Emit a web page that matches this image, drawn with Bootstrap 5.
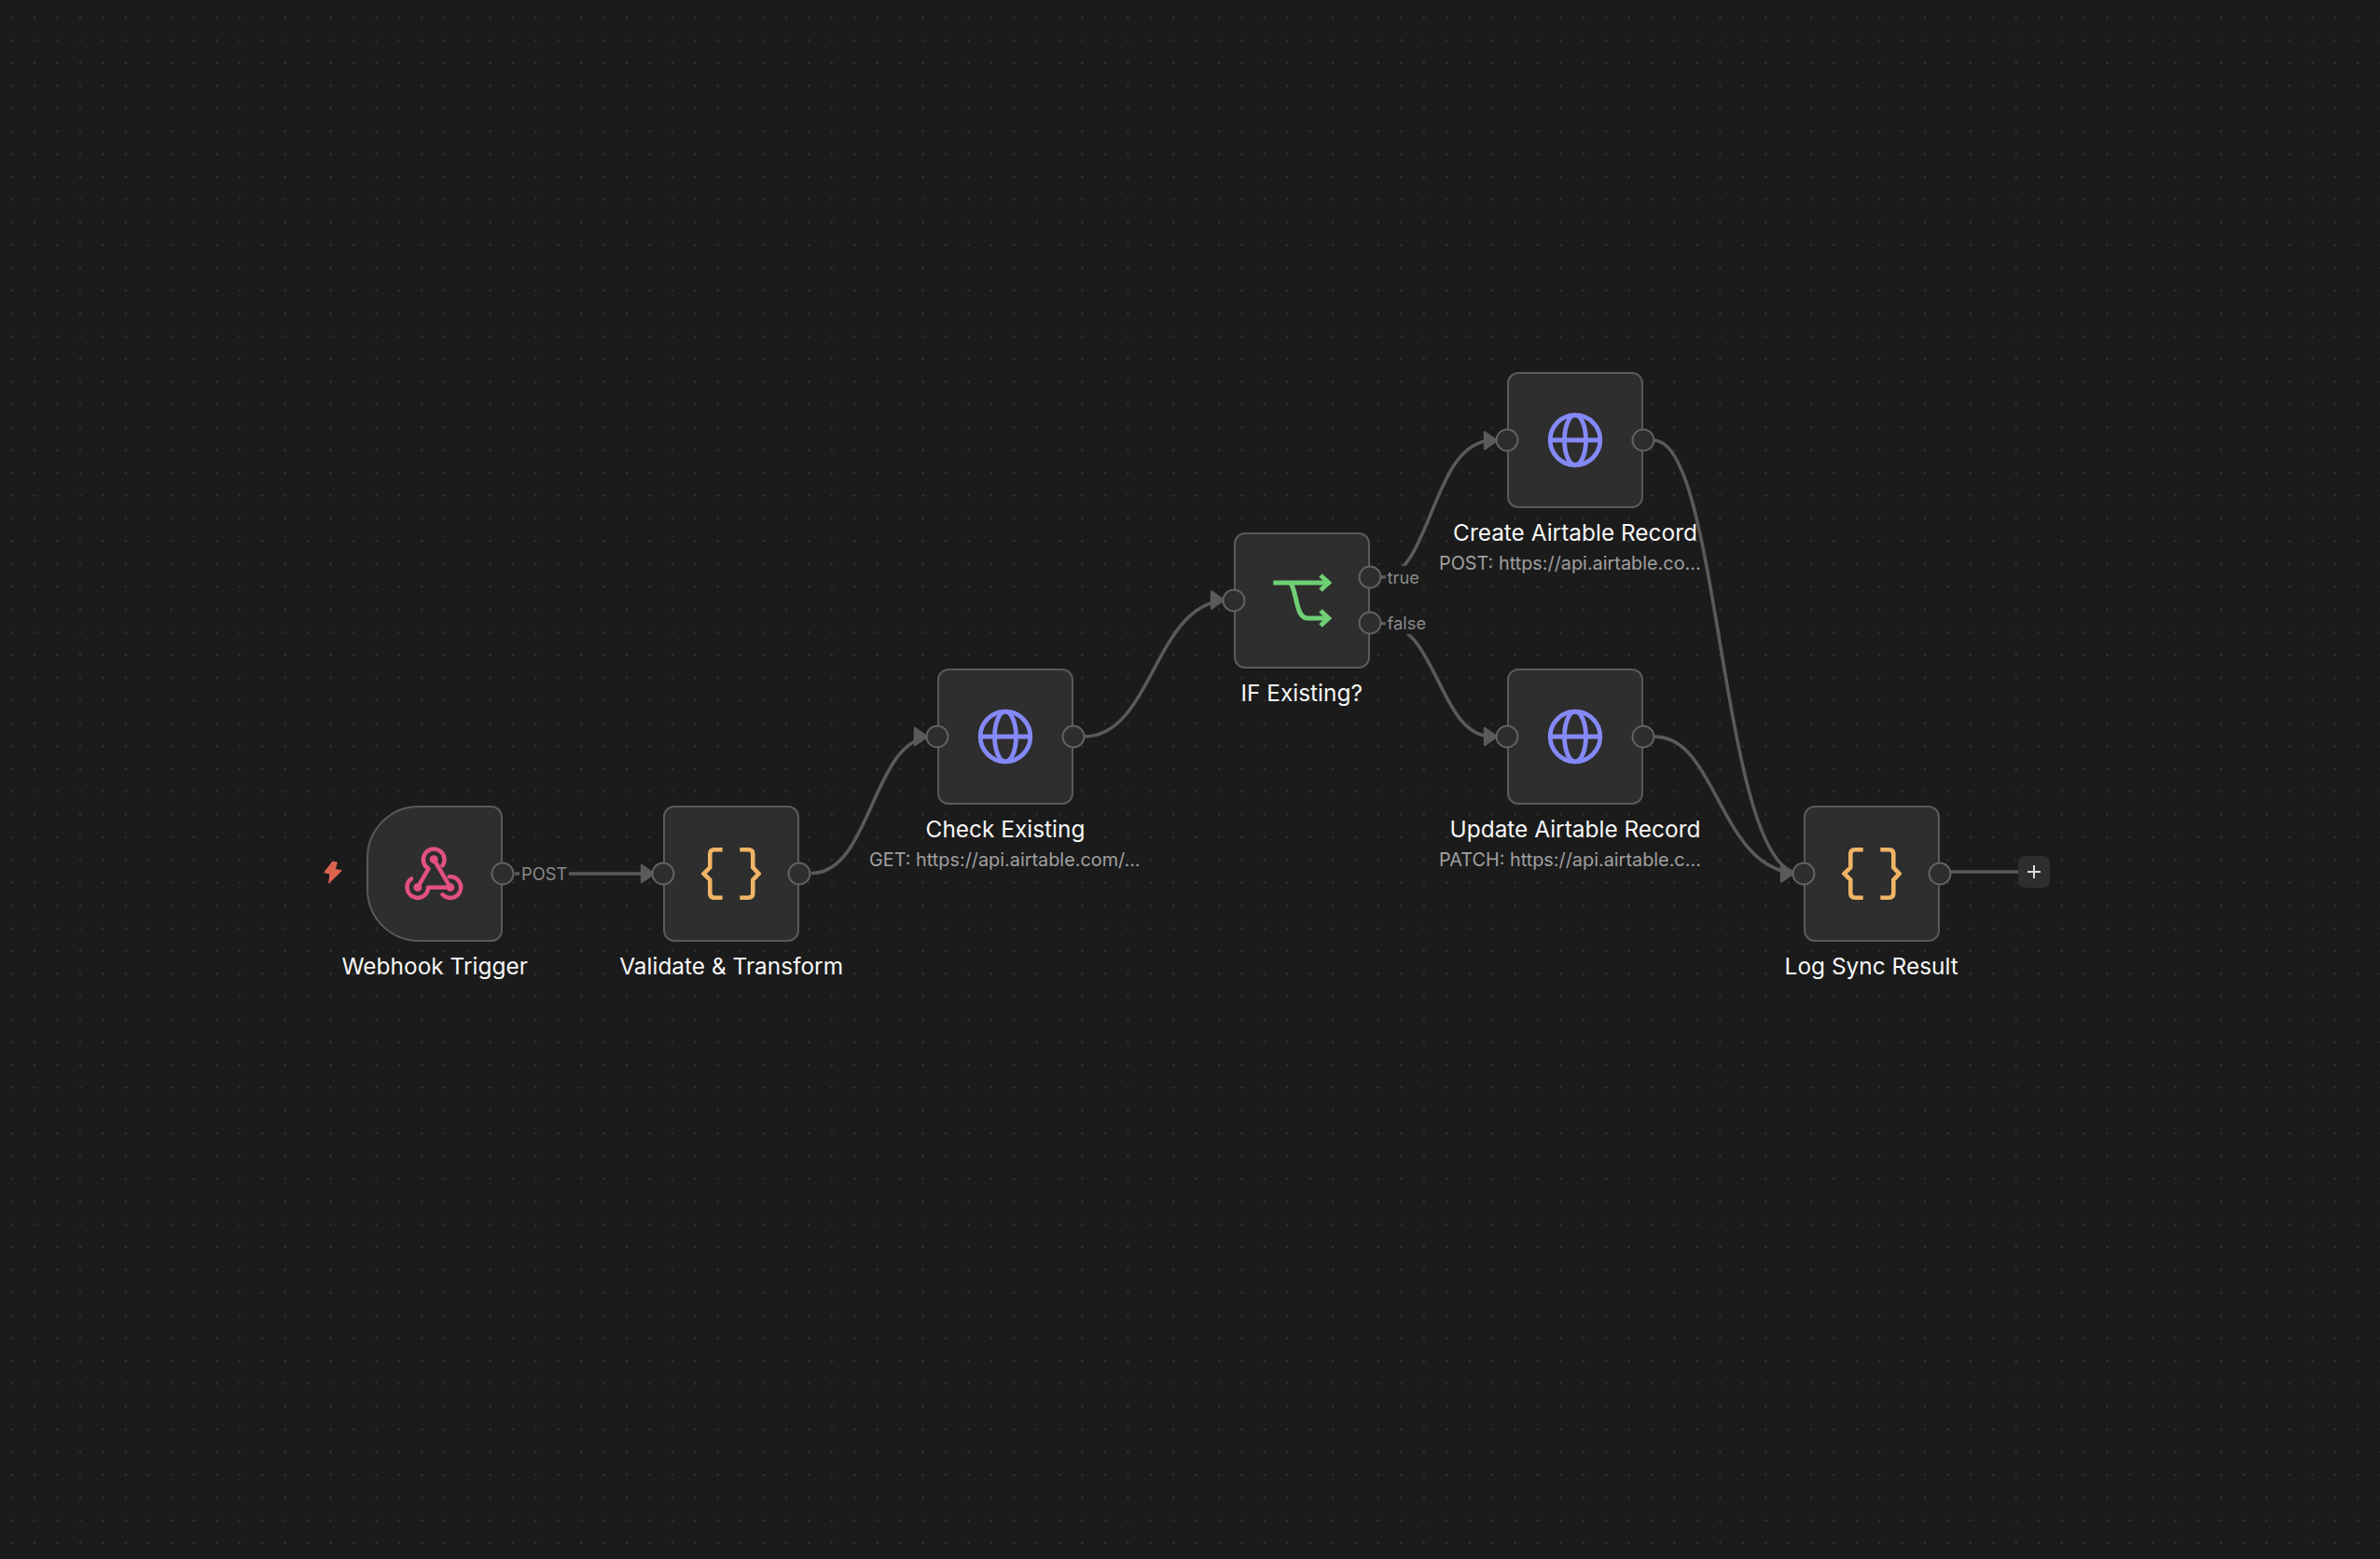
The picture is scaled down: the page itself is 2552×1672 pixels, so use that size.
<!DOCTYPE html>
<html lang="en" data-bs-theme="dark">
<head>
<meta charset="utf-8">
<title>Workflow canvas</title>
<link href="https://cdn.jsdelivr.net/npm/bootstrap@5.3.0/dist/css/bootstrap.min.css" rel="stylesheet">
<style>
html,body{height:100%;margin:0;background:#1b1b1b}
body{font-family:"Inter","Liberation Sans",sans-serif}
.canvas{width:2552px;height:1672px;background-color:#1b1b1b;background-image:radial-gradient(circle at center,#3a3a3a 0,#3a3a3a .8px,transparent 1.3px);background-size:24.43px 24.43px;background-position:.5px 6.5px;overflow:hidden}
.edges{left:0;top:0;width:2552px;height:1672px}
.edge{fill:none;stroke:#5a5a5a;stroke-width:3.6}
.tip{fill:#5a5a5a;stroke:#5a5a5a;stroke-width:2.4;stroke-linejoin:round}
.node{width:146px;height:146px}
.tile{width:146px;height:146px;background:#2e2e2e;border:2px solid #5a5a5a;border-radius:12px}
.tile.trigger{border-radius:56px 12px 12px 56px}
.port{width:25px;height:25px;border-radius:50%;background:#2e2e2e;border:2px solid #626262;transform:translate(-50%,-50%)}
.port.in{left:-2px;top:50%}
.port.out{left:calc(100% + 2px);top:50%}
.port.t{top:32.7%}
.port.f{top:67.6%}
.caption{top:158px;left:-77px;width:300px}
.title{font-size:24.43px;line-height:28px;font-weight:400;color:#f8f8f8;text-align:center}
.sub{font-size:19.85px;line-height:24px;color:#a0a0a0;margin-top:7px;padding-left:4px;white-space:nowrap}
.elabel{font-size:18.32px;line-height:24px;color:#8a8a8a;background:#1b1b1b;padding:0 2px;transform:translateY(-50%)}
.plus{left:2164px;top:918px;width:34px;height:34px;background:#2e2e2e;border-radius:7px}
.bolt{left:340px;top:915px}
.n1{left:393.2px;top:864px}.n2{left:711.2px;top:864px}.n3{left:1005px;top:717px}.n4{left:1322.7px;top:570.5px}
.n5{left:1616px;top:399px}.n6{left:1616px;top:717px}.n7{left:1933.7px;top:864px}
.l1{left:557px;top:937px}.l2{left:1485.5px;top:619px}.l3{left:1485.5px;top:668px}
</style>
</head>
<body>
<main class="canvas position-relative">
<svg class="edges position-absolute" viewBox="0 0 2552 1672">
<path class="edge" d="M552 937H690"/>
<path class="tip" d="M688 928L701 937L688 946Z"/>
<path class="edge" d="M870 936.5C935 936.5 935 790 1000 790"/>
<path class="tip" d="M981 781L994 790L981 799Z"/>
<path class="edge" d="M1162 790C1237 790 1237 643.5 1318 643.5"/>
<path class="tip" d="M1299 634.5L1312 643.5L1299 652.5Z"/>
<path class="edge" d="M1481 619C1535 619 1535 472.5 1600 472.5"/>
<path class="tip" d="M1592 463.5L1605 472.5L1592 481.5Z"/>
<path class="edge" d="M1481 668.5C1542 668.5 1542 790 1600 790"/>
<path class="tip" d="M1592 781L1605 790L1592 799Z"/>
<path class="edge" d="M1774 472.5C1845 472.5 1845 936.5 1930 936.5"/>
<path class="edge" d="M1774 790C1843 790 1843 936.5 1930 936.5"/>
<path class="tip" d="M1910 927.5L1923 936.5L1910 945.5Z"/>
<path class="edge" d="M2092 935H2166"/>
</svg>

<span class="elabel position-absolute l1">POST</span>
<span class="elabel position-absolute l2">true</span>
<span class="elabel position-absolute l3">false</span>

<svg class="bolt position-absolute" width="40" height="40" viewBox="0 0 120 120"><path d="M50 27L23 62L42 66L38 96L79 56L58 52L64 30Z" fill="#dc6350" stroke="#dc6350" stroke-width="3" stroke-linejoin="round"/></svg>

<section class="node position-absolute n1">
<div class="tile trigger position-relative d-flex align-items-center justify-content-center">
<svg width="80" height="70" viewBox="4.5 6 240 210" fill="none" stroke="#e2517f" stroke-width="13.5" stroke-linecap="round" stroke-linejoin="round">
<path d="M70 155L105 95A34 34 0 1 1 150 85"/><path d="M122 65L175 155"/><path d="M172 121A34 34 0 1 1 150 178"/><path d="M175 155H104A34 34 0 1 1 50 127"/>
<circle cx="122" cy="65" r="13.5" fill="#e2517f" stroke="none"/><circle cx="70" cy="155" r="13.5" fill="#e2517f" stroke="none"/><circle cx="175" cy="155" r="13.5" fill="#e2517f" stroke="none"/>
</svg>
<span class="port out position-absolute"></span>
</div>
<div class="caption position-absolute"><div class="title">Webhook Trigger</div></div>
</section>

<section class="node position-absolute n2">
<div class="tile position-relative d-flex align-items-center justify-content-center">
<svg width="64" height="60" viewBox="0 0 64 60" fill="none" stroke="#efb466" stroke-width="4.6"><path d="M22.7 4.3H14Q9.3 4.3 9.3 9V23.3L2.5 30L9.3 36.7V51Q9.3 55.7 14 55.7H22.7"/><path d="M41.3 4.3H50.6Q55.3 4.3 55.3 9V23.3L61.5 30L55.3 36.7V51Q55.3 55.7 50.6 55.7H41.3"/></svg>
<span class="port in position-absolute"></span><span class="port out position-absolute"></span>
</div>
<div class="caption position-absolute"><div class="title">Validate &amp; Transform</div></div>
</section>

<section class="node position-absolute n3">
<div class="tile position-relative d-flex align-items-center justify-content-center">
<svg width="60" height="60" viewBox="0 0 60 60" fill="none" stroke="#8589f7" stroke-width="4.8"><circle cx="30" cy="30" r="26.8"/><ellipse cx="30" cy="30" rx="11.5" ry="26.8"/><path d="M3 30H57"/></svg>
<span class="port in position-absolute"></span><span class="port out position-absolute"></span>
</div>
<div class="caption position-absolute"><div class="title">Check Existing</div><div class="sub">GET: https://api.airtable.com/...</div></div>
</section>

<section class="node position-absolute n4">
<div class="tile position-relative d-flex align-items-center justify-content-center">
<svg width="64" height="60" viewBox="0 0 64 60" fill="none" stroke="#6fcf75" stroke-width="5"><path d="M1.3 11H60"/><path d="M52 3L60.5 11L52 19"/><path d="M19 11C23 13 25 28 28 38Q31 49 38 49H60"/><path d="M52 41L60.5 49L52 57"/></svg>
<span class="port in position-absolute"></span><span class="port out t position-absolute"></span><span class="port out f position-absolute"></span>
</div>
<div class="caption position-absolute"><div class="title">IF Existing?</div></div>
</section>

<section class="node position-absolute n5">
<div class="tile position-relative d-flex align-items-center justify-content-center">
<svg width="60" height="60" viewBox="0 0 60 60" fill="none" stroke="#8589f7" stroke-width="4.8"><circle cx="30" cy="30" r="26.8"/><ellipse cx="30" cy="30" rx="11.5" ry="26.8"/><path d="M3 30H57"/></svg>
<span class="port in position-absolute"></span><span class="port out position-absolute"></span>
</div>
<div class="caption position-absolute"><div class="title">Create Airtable Record</div><div class="sub">POST: https://api.airtable.co...</div></div>
</section>

<section class="node position-absolute n6">
<div class="tile position-relative d-flex align-items-center justify-content-center">
<svg width="60" height="60" viewBox="0 0 60 60" fill="none" stroke="#8589f7" stroke-width="4.8"><circle cx="30" cy="30" r="26.8"/><ellipse cx="30" cy="30" rx="11.5" ry="26.8"/><path d="M3 30H57"/></svg>
<span class="port in position-absolute"></span><span class="port out position-absolute"></span>
</div>
<div class="caption position-absolute"><div class="title">Update Airtable Record</div><div class="sub">PATCH: https://api.airtable.c...</div></div>
</section>

<section class="node position-absolute n7">
<div class="tile position-relative d-flex align-items-center justify-content-center">
<svg width="64" height="60" viewBox="0 0 64 60" fill="none" stroke="#efb466" stroke-width="4.6"><path d="M22.7 4.3H14Q9.3 4.3 9.3 9V23.3L2.5 30L9.3 36.7V51Q9.3 55.7 14 55.7H22.7"/><path d="M41.3 4.3H50.6Q55.3 4.3 55.3 9V23.3L61.5 30L55.3 36.7V51Q55.3 55.7 50.6 55.7H41.3"/></svg>
<span class="port in position-absolute"></span><span class="port out position-absolute"></span>
</div>
<div class="caption position-absolute"><div class="title">Log Sync Result</div></div>
</section>

<div class="plus position-absolute d-flex align-items-center justify-content-center">
<svg width="14" height="14" viewBox="0 0 14 14" stroke="#dedede" stroke-width="2"><path d="M7 0V14M0 7H14"/></svg>
</div>
</main>
<script src="https://cdn.jsdelivr.net/npm/bootstrap@5.3.0/dist/js/bootstrap.bundle.min.js"></script>
</body>
</html>
